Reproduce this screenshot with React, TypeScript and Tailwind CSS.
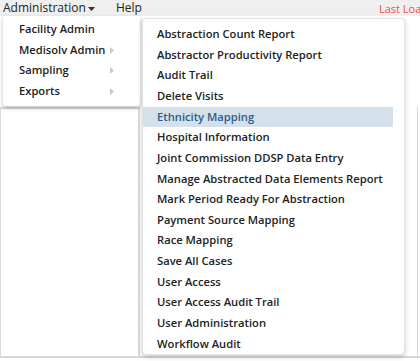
const SUB_ITEMS = [
  "Abstraction Count Report",
  "Abstractor Productivity Report",
  "Audit Trail",
  "Delete Visits",
  "Ethnicity Mapping",
  "Hospital Information",
  "Joint Commission DDSP Data Entry",
  "Manage Abstracted Data Elements Report",
  "Mark Period Ready For Abstraction",
  "Payment Source Mapping",
  "Race Mapping",
  "Save All Cases",
  "User Access",
  "User Access Audit Trail",
  "User Administration",
  "Workflow Audit",
];

const MAIN_ITEMS = [
  { label: "Facility Admin", sub: false },
  { label: "Medisolv Admin", sub: true },
  { label: "Sampling", sub: true },
  { label: "Exports", sub: true },
];

function Caret() {
  return (
    <svg width="7" height="4" viewBox="0 0 7 4" className="ml-[2px] mt-[1px]">
      <path d="M0 0h7L3.5 4z" fill="#333" />
    </svg>
  );
}

function SubArrow() {
  return (
    <svg width="4" height="7" viewBox="0 0 4 7">
      <path d="M0 0l4 3.5L0 7z" fill="#c8c8c8" />
    </svg>
  );
}

export default function App() {
  return (
    <div
      className="relative h-[361px] w-[420px] overflow-hidden bg-white text-[12px] text-[#222]"
      style={{ fontFamily: '"Open Sans", sans-serif' }}
    >
      {/* Top menu bar */}
      <div className="flex h-[16px] items-center bg-[#efefef] leading-none">
        <div className="ml-[3px] flex items-center">
          Administration
          <Caret />
        </div>
        <div className="ml-[21px]">Help</div>
        <div className="ml-auto mr-[-8px] text-[11px] text-[#f24b4b] whitespace-nowrap">Last Load</div>
      </div>

      {/* Page behind */}
      <div className="flex h-[342px] flex-col">
        <div className="h-[91px]" />
        <div className="flex flex-1 border-b-2 border-[#d8d8d8]">
          <div className="w-[140px] border-l border-r-2 border-t-2 border-[#dcdcdc]" />
          <div className="flex-1" />
          <div className="w-[3px] border-l border-[#d8d8d8]" />
        </div>
      </div>

      {/* Primary dropdown */}
      <div className="absolute left-[3px] top-[16px] w-[137px] rounded-b-[3px] bg-white pt-[3px] pb-[4px] shadow-[0_2px_4px_rgba(0,0,0,0.25)]">
        {MAIN_ITEMS.map((item) => (
          <div
            key={item.label}
            className="flex h-[20.7px] items-center whitespace-nowrap pl-[16px] pr-[26px] text-[11.2px] font-semibold text-[#222]"
          >
            <span className="flex-1">{item.label}</span>
            {item.sub && <SubArrow />}
          </div>
        ))}
      </div>

      {/* Submenu */}
      <div className="absolute left-[142px] top-[18px] h-[337px] w-[263px] rounded-[4px] border border-[#e2e2e2] bg-white pt-[5px] shadow-[0_2px_5px_rgba(0,0,0,0.2)]">
        {SUB_ITEMS.map((label) => {
          const active = label === "Ethnicity Mapping";
          return (
            <div
              key={label}
              className={
                active
                  ? "mr-[11px] flex h-[20.67px] items-center whitespace-nowrap bg-[#d4e0ea] pl-[14px] text-[11.2px] font-semibold text-[#2d5d8d]"
                  : "mr-[11px] flex h-[20.67px] items-center whitespace-nowrap pl-[14px] text-[11.2px] font-semibold text-[#222]"
              }
            >
              {label}
            </div>
          );
        })}
      </div>
    </div>
  );
}
